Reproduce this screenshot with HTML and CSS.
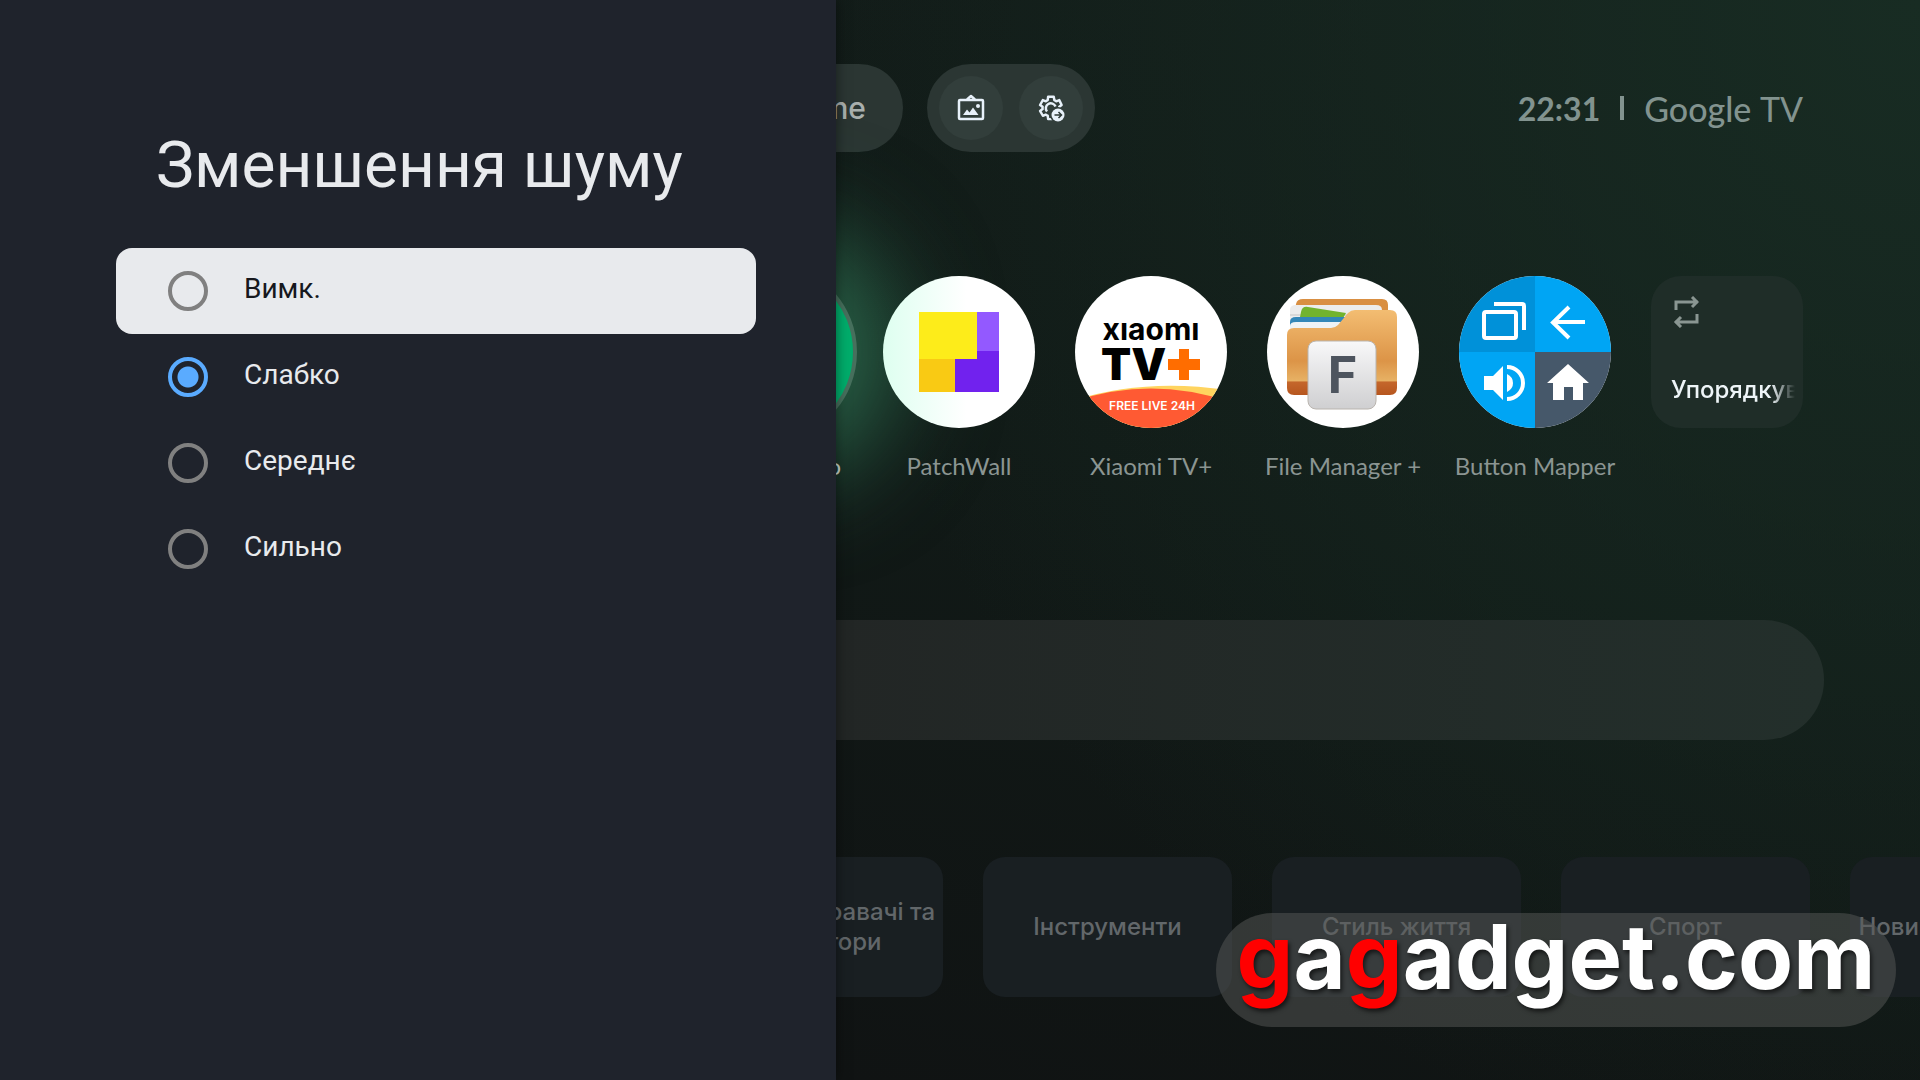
FILE: index.html
```html
<!DOCTYPE html>
<html lang="uk">

<head>
  <meta charset="UTF-8">
  <meta name="viewport" content="width=device-width, initial-scale=1.0">
  <title>Зменшення шуму</title>
  <link rel="stylesheet" href="styles.css">
</head>

<body>
  <div class="screen">
    <aside class="panel">
      <h1 class="panel-title" id="panel-title">Зменшення шуму</h1>
      <form class="options" role="radiogroup" aria-labelledby="panel-title">
        <label class="option active">
          <input type="radio" name="noise" value="off">
          <span>Вимк.</span>
        </label>
        <label class="option">
          <input type="radio" name="noise" value="low" checked>
          <span>Слабко</span>
        </label>
        <label class="option">
          <input type="radio" name="noise" value="medium">
          <span>Середнє</span>
        </label>
        <label class="option">
          <input type="radio" name="noise" value="high">
          <span>Сильно</span>
        </label>
      </form>
    </aside>

    <main class="home">
      <header class="topbar">
        <a class="tab" href="#">Home</a>
        <div class="quick">
          <button type="button" class="round" aria-label="Заставка">
            <svg width="28" height="28" viewBox="0 0 28 28" fill="none" stroke="#e8f1fa" stroke-width="2.500" stroke-linejoin="round">
              <rect x="2" y="6" width="24" height="19" rx="1"/>
              <path d="M10 5.500l4-3.500 4 3.500"/>
              <path d="M6 21l4-5.500 2.500 3 3.500-5 5.500 7.500z" fill="#e8f1fa" stroke="none"/>
              <circle cx="21" cy="12" r="2" fill="#e8f1fa" stroke="none"/>
            </svg>
          </button>
          <button type="button" class="round" aria-label="Налаштування">
            <svg width="28" height="28" viewBox="0 0 28 28">
              <mask id="cut">
                <rect width="28" height="28" fill="#fff"/>
                <circle cx="21" cy="21" r="8" fill="#000"/>
              </mask>
              <g mask="url(#cut)" fill="none" stroke="#e8f1fa" stroke-linejoin="round">
                <path transform="translate(.5 .5) scale(1.120)" stroke-width="2.200" d="M19.430 12.980c.04-.32.07-.64.07-.98 0-.34-.03-.66-.07-.98l2.110-1.650-2.120-4.350-2.660 1.030c-.52-.4-1.080-.73-1.690-.98L14.500 2h-5l-.37 3.070c-.61.25-1.170.59-1.690.98l-2.660-1.030-2.500 4.350 2.290 1.650c-.04.32-.07.65-.07.98 0 .33.03.66.07.98l-2.290 1.650 2.500 4.350 2.660-1.030c.52.4 1.080.73 1.690.98L9.500 22h5l.57-3.070 1.690-.98 2.660 1.030 2.120-4.350z"/>
                <path d="M10 17.500a5 5 0 1 1 8.500-5" stroke-width="2.500"/>
              </g>
              <circle cx="21" cy="21" r="6.500" fill="#e8f1fa"/>
              <path d="M17.500 21h6.500M21.500 18l3 3-3 3" fill="none" stroke="#2c3835" stroke-width="1.500"/>
            </svg>
          </button>
        </div>
        <div class="status">
          <time class="clock">22:31</time>
          <span class="divider"></span>
          <span class="brand">Google <span class="brand-tv">TV</span></span>
        </div>
      </header>

      <nav class="apps">
        <a class="app focused" href="#">
          <span class="icon"></span>
          <span class="name">Радіо</span>
        </a>
        <a class="app" href="#">
          <span class="icon patchwall">
            <svg width="152" height="152" viewBox="0 0 152 152">
              <path fill="#fdec1a" d="M36 36h58v47H36z"/>
              <path fill="#9359ff" d="M94 36h22v39H94z"/>
              <path fill="#f9ca14" d="M36 83h36v33H36z"/>
              <path fill="#7122ee" d="M94 75h22v41H72V83h22z"/>
            </svg>
          </span>
          <span class="name">PatchWall</span>
        </a>
        <a class="app" href="#">
          <span class="icon">
            <svg width="152" height="152" viewBox="0 0 152 152">
              <path fill="#ffd45f" d="M0 124Q70 102 152 114V152H0z"/>
              <path fill="#ff5a33" d="M0 125Q76 100 152 125V152H0z"/>
              <text class="logo-mi" x="76" y="64" text-anchor="middle">xıaomı</text>
              <text class="logo-tv" x="26" y="104">TV</text>
              <path fill="#ff6d00" d="M104 73h10v10h11v11h-11v10h-10V94H93V83h11z"/>
              <text class="logo-live" x="77" y="134" text-anchor="middle">FREE LIVE 24H</text>
            </svg>
          </span>
          <span class="name">Xiaomi TV+</span>
        </a>
        <a class="app" href="#">
          <span class="icon">
            <svg width="152" height="152" viewBox="0 0 152 152">
              <defs>
                <linearGradient id="folder" x1="0" y1="0" x2="0" y2="1">
                  <stop offset="0" stop-color="#f3bd72"/>
                  <stop offset=".6" stop-color="#dc9447"/>
                  <stop offset=".83" stop-color="#e7b164"/>
                  <stop offset=".85" stop-color="#c4662b"/>
                  <stop offset="1" stop-color="#b6561f"/>
                </linearGradient>
                <linearGradient id="tile" x1="0" y1="0" x2="0" y2="1">
                  <stop offset="0" stop-color="#f8f8f9"/>
                  <stop offset="1" stop-color="#cfcfd1"/>
                </linearGradient>
              </defs>
              <path fill="#d98f42" d="M29 28q1-5 7-5h79q6 0 6 6v14H27z"/>
              <path fill="#ececec" d="M23 34q0-5 6-5h80q6 0 6 5v26H23z"/>
              <path fill="#d8d8d8" d="M23 38h60v2H23z"/>
              <path fill="#72b32e" d="M34 36q1-6 7-5l38 6-8 14H31z"/>
              <path fill="#3387b8" d="M23 46q0-5 6-5h50l-6 18H23z"/>
              <path fill="#eef3f6" d="M23 50q0-4 6-4h45l-4 15H23z"/>
              <path fill="url(#folder)" d="M20 59q0-7 7-7h37q4 0 7-3l10-12q3-3 7-3h35q7 0 7 7v71q0 7-7 7H27q-7 0-7-7z"/>
              <rect x="41" y="65" width="68" height="68" rx="8" fill="url(#tile)" stroke="#b9b4ae"/>
              <text class="logo-f" x="75" y="117" text-anchor="middle">F</text>
            </svg>
          </span>
          <span class="name">File Manager +</span>
        </a>
        <a class="app" href="#">
          <span class="icon">
            <svg width="152" height="152" viewBox="0 0 152 152">
              <path fill="#0091d9" d="M0 0h76v76H0z"/>
              <path fill="#00a5f4" d="M76 0h76v76H76zM0 76h76v76H0z"/>
              <path fill="#46586a" d="M76 76h76v76H76z"/>
              <g fill="none" stroke="#fff" stroke-width="4">
                <rect x="25" y="36" width="32" height="26" rx="2"/>
                <path d="M35 28h28q2 0 2 2v24"/>
                <path d="M126 46H95M110 31L94 46.500 110 62"/>
                <path d="M48 91a16 16 0 0 1 0 32"/>
              </g>
              <g fill="#fff">
                <path d="M25 100h9l10-10v34l-10-10h-9z"/>
                <path d="M48 98q6 3 6 9t-6 9z"/>
                <path d="M109 88l21 19h-6v17h-10v-13h-9v13H94v-17h-6z"/>
              </g>
            </svg>
          </span>
          <span class="name">Button Mapper</span>
        </a>
        <button type="button" class="arrange">
          <svg width="28" height="32" viewBox="0 0 28 32" fill="none" stroke="#8a9692" stroke-width="3">
            <path d="M5 14V6h22M21 1l5 5-5 5"/>
            <path d="M26 18v8H4M10 21l-5 5 5 5"/>
          </svg>
          <span>Упорядкувати</span>
        </button>
      </nav>

      <section class="banner"></section>

      <nav class="categories">
        <a class="card" href="#">Медіапрогравачі та редактори</a>
        <a class="card" href="#">Інструменти</a>
        <a class="card" href="#">Стиль життя</a>
        <a class="card" href="#">Спорт</a>
        <a class="card" href="#">Новини та журнали</a>
      </nav>
    </main>

    <div class="watermark"><b>g</b>a<b>g</b>adget.com</div>
  </div>
</body>

</html>
```

FILE: styles.css
```css
* {
  box-sizing: border-box;
}

body {
  margin: 0;
  background: #101413;
  font-family: Lato, "Open Sans", sans-serif;
}

a {
  color: inherit;
  text-decoration: none;
}

button {
  border: none;
  font-family: inherit;
  cursor: pointer;
}

.screen {
  position: relative;
  display: grid;
  grid-template-columns: 209fr 271fr;
  min-height: 100vh;
  overflow: hidden;
}

/* settings panel */
.panel {
  z-index: 1;
  padding: 128px 80px 0 116px;
  background: #1f232c;
  box-shadow: 0 0 12px rgba(0, 0, 0, 0.5);
  font-family: Roboto, sans-serif;
  color: #e8eaed;
}

.panel-title {
  margin: 0 0 44px;
  padding-left: 40px;
  font-size: 64px;
  font-weight: 400;
  line-height: 76px;
}

.option {
  display: flex;
  align-items: center;
  gap: 36px;
  height: 86px;
  padding-left: 52px;
  border-radius: 16px;
  font-size: 28px;
  line-height: 32px;
}

.option span {
  padding-bottom: 4px;
}

.option.active {
  background: #e8eaed;
  color: #16181d;
}

.option input {
  appearance: none;
  width: 40px;
  height: 40px;
  margin: 0;
  border: 4px solid #808080;
  border-radius: 50%;
}

.option input:checked {
  border-color: #5aabff;
  background: radial-gradient(circle, #5aabff 10px, transparent 11px);
}

/* home screen */
.home {
  display: flex;
  flex-direction: column;
  min-width: 0;
  padding: 64px 0 83px;
  overflow: hidden;
  background:
    radial-gradient(ellipse 1100px 1200px at 100% 0, #182c23, transparent),
    linear-gradient(15deg, #101313, #111a17 50%, #131d1a);
}

.topbar {
  display: flex;
  align-items: center;
  gap: 24px;
  height: 88px;
  padding-right: 117px;
}

.tab {
  display: flex;
  align-items: center;
  justify-content: flex-end;
  width: 67px;
  height: 88px;
  padding-right: 37px;
  overflow: hidden;
  border-radius: 0 44px 44px 0;
  background: #2b3633;
  color: #a9b0ae;
  font-family: Inter, sans-serif;
  font-size: 30px;
  font-weight: 500;
}

.quick {
  display: flex;
  gap: 16px;
  padding: 12px;
  border-radius: 44px;
  background: #2b3633;
}

.round {
  display: flex;
  align-items: center;
  justify-content: center;
  width: 64px;
  height: 64px;
  padding: 0;
  border-radius: 50%;
  background: #323e3b;
}

.status {
  display: flex;
  align-items: center;
  gap: 20px;
  margin-left: auto;
  color: #82938f;
}

.clock {
  font-size: 32px;
  font-weight: 700;
}

.divider {
  width: 4px;
  height: 24px;
  background: #82938f;
}

.brand {
  font-size: 34px;
  font-weight: 500;
}

.brand-tv {
  font-weight: 400;
}

.apps {
  display: flex;
  justify-content: flex-end;
  gap: 40px;
  margin-top: 124px;
  padding-right: 117px;
}

.app {
  display: flex;
  flex: 0 0 152px;
  flex-direction: column;
  align-items: center;
  gap: 22px;
  min-width: 0;
  color: #8b9592;
}

.icon {
  flex-shrink: 0;
  width: 152px;
  height: 152px;
  overflow: hidden;
  border-radius: 50%;
  background: #fff;
}

.icon svg {
  display: block;
}

.patchwall {
  background: linear-gradient(to right, #defff0, #fff 55%);
}

/* keeps the neighbouring icon above the glow */
.app:not(.focused) {
  position: relative;
}

.name {
  font-size: 24px;
  line-height: 32px;
  white-space: nowrap;
}

.focused {
  color: #c5d3cd;
}

.focused .icon {
  width: 180px;
  height: 180px;
  margin: -14px 0;
  border: 4px solid #47705d;
  background: #00ad6b;
  box-shadow: 0 0 100px 40px rgba(52, 132, 95, 0.7);
}

.focused .name {
  width: 148px;
  text-align: right;
}

.logo-mi {
  font: 700 30px Inter, sans-serif;
}

.logo-tv {
  font: 900 44px Inter, sans-serif;
}

.logo-live {
  fill: #fff;
  font: 600 12px Inter, sans-serif;
}

.logo-f {
  fill: #4d545e;
  font: 700 52px Roboto, sans-serif;
}

.arrange {
  display: flex;
  flex: 0 0 152px;
  flex-direction: column;
  align-items: flex-start;
  justify-content: space-between;
  min-width: 0;
  height: 152px;
  padding: 20px 8px 22px 20px;
  border-radius: 30px;
  background: #1f2d28;
  color: #eef5f8;
  font-family: Inter, sans-serif;
  font-size: 24px;
  font-weight: 500;
  line-height: 32px;
}

.arrange span {
  width: 124px;
  overflow: hidden;
  text-align: left;
  white-space: nowrap;
  mask-image: linear-gradient(to right, #000 100px, transparent);
}

.banner {
  height: 120px;
  margin: 138px 96px 0 0;
  border-radius: 0 60px 60px 0;
  background: linear-gradient(to right, #222625, #232f2b);
}

.categories {
  display: flex;
  gap: 40px;
  margin: 117px 0 0 -142px;
}

.card {
  display: flex;
  flex: 0 0 249px;
  align-items: center;
  justify-content: center;
  height: 140px;
  border-radius: 22px;
  background: #191f22;
  color: #62676a;
  font-family: Inter, sans-serif;
  font-size: 24px;
  font-weight: 500;
  line-height: 30px;
  text-align: center;
}

/* site badge over the screen */
.watermark {
  position: absolute;
  right: 24px;
  bottom: 53px;
  z-index: 2;
  width: 680px;
  height: 114px;
  border-radius: 57px;
  background: rgba(88, 90, 88, 0.5);
  color: #fff;
  font-family: Inter, sans-serif;
  font-size: 90px;
  font-weight: 700;
  line-height: 88px;
  text-align: center;
  text-shadow: 2px 3px 4px rgba(0, 0, 0, 0.6);
}

.watermark b {
  color: #f00;
  font-weight: inherit;
}
```
